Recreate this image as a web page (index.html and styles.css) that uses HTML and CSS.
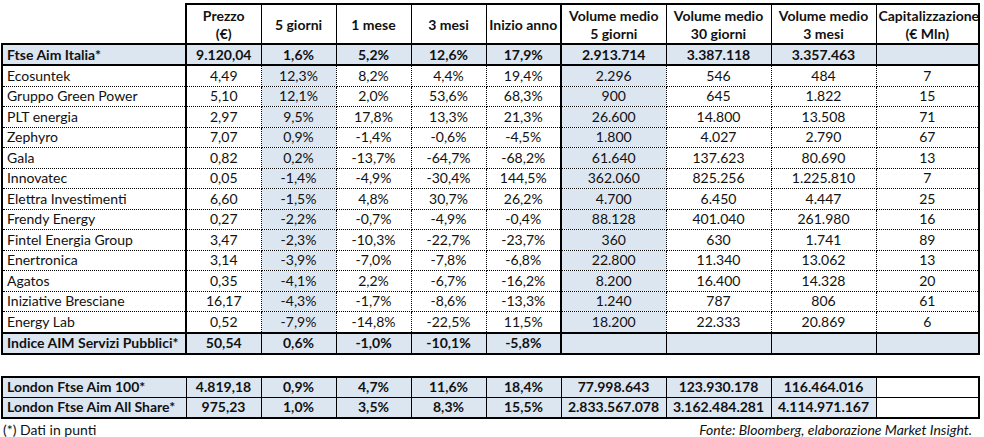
FILE: index.html
```html
<!DOCTYPE html>
<html lang="it">
<head>
<meta charset="utf-8">
<link rel="stylesheet" href="styles.css">
</head>
<body>
<div class="page">
<table class="tbl">
  <colgroup>
    <col class="c-label"><col class="c-s"><col class="c-s"><col class="c-s"><col class="c-s"><col class="c-s">
    <col class="c-w"><col class="c-w"><col class="c-w"><col class="c-cap">
  </colgroup>
  <thead>
    <tr class="head">
      <th class="blank"></th>
      <th class="g">Prezzo<br>(€)</th>
      <th>5 giorni</th>
      <th>1 mese</th>
      <th>3 mesi</th>
      <th>Inizio anno</th>
      <th class="g">Volume medio<br>5 giorni</th>
      <th>Volume medio<br>30 giorni</th>
      <th>Volume medio<br>3 mesi</th>
      <th class="last">Capitalizzazione<br>(€ Mln)</th>
    </tr>
  </thead>
  <tbody>
    <tr class="idx">
      <td class="lbl">Ftse Aim Italia*</td>
      <td class="g">9.120,04</td><td>1,6%</td><td>5,2%</td><td>12,6%</td><td>17,9%</td>
      <td class="g">2.913.714</td><td>3.387.118</td><td>3.357.463</td><td class="last"></td>
    </tr>
    <tr class="row"><td class="lbl">Ecosuntek</td><td class="g">4,49</td><td class="b">12,3%</td><td>8,2%</td><td>4,4%</td><td>19,4%</td><td class="g b">2.296</td><td>546</td><td>484</td><td class="last">7</td></tr>
    <tr class="row"><td class="lbl">Gruppo Green Power</td><td class="g">5,10</td><td class="b">12,1%</td><td>2,0%</td><td>53,6%</td><td>68,3%</td><td class="g b">900</td><td>645</td><td>1.822</td><td class="last">15</td></tr>
    <tr class="row"><td class="lbl">PLT energia</td><td class="g">2,97</td><td class="b">9,5%</td><td>17,8%</td><td>13,3%</td><td>21,3%</td><td class="g b">26.600</td><td>14.800</td><td>13.508</td><td class="last">71</td></tr>
    <tr class="row"><td class="lbl">Zephyro</td><td class="g">7,07</td><td class="b">0,9%</td><td>-1,4%</td><td>-0,6%</td><td>-4,5%</td><td class="g b">1.800</td><td>4.027</td><td>2.790</td><td class="last">67</td></tr>
    <tr class="row"><td class="lbl">Gala</td><td class="g">0,82</td><td class="b">0,2%</td><td>-13,7%</td><td>-64,7%</td><td>-68,2%</td><td class="g b">61.640</td><td>137.623</td><td>80.690</td><td class="last">13</td></tr>
    <tr class="row"><td class="lbl">Innovatec</td><td class="g">0,05</td><td class="b">-1,4%</td><td>-4,9%</td><td>-30,4%</td><td>144,5%</td><td class="g b">362.060</td><td>825.256</td><td>1.225.810</td><td class="last">7</td></tr>
    <tr class="row"><td class="lbl">Elettra Investimenti</td><td class="g">6,60</td><td class="b">-1,5%</td><td>4,8%</td><td>30,7%</td><td>26,2%</td><td class="g b">4.700</td><td>6.450</td><td>4.447</td><td class="last">25</td></tr>
    <tr class="row"><td class="lbl">Frendy Energy</td><td class="g">0,27</td><td class="b">-2,2%</td><td>-0,7%</td><td>-4,9%</td><td>-0,4%</td><td class="g b">88.128</td><td>401.040</td><td>261.980</td><td class="last">16</td></tr>
    <tr class="row"><td class="lbl">Fintel Energia Group</td><td class="g">3,47</td><td class="b">-2,3%</td><td>-10,3%</td><td>-22,7%</td><td>-23,7%</td><td class="g b">360</td><td>630</td><td>1.741</td><td class="last">89</td></tr>
    <tr class="row"><td class="lbl">Enertronica</td><td class="g">3,14</td><td class="b">-3,9%</td><td>-7,0%</td><td>-7,8%</td><td>-6,8%</td><td class="g b">22.800</td><td>11.340</td><td>13.062</td><td class="last">13</td></tr>
    <tr class="row"><td class="lbl">Agatos</td><td class="g">0,35</td><td class="b">-4,1%</td><td>2,2%</td><td>-6,7%</td><td>-16,2%</td><td class="g b">8.200</td><td>16.400</td><td>14.328</td><td class="last">20</td></tr>
    <tr class="row"><td class="lbl">Iniziative Bresciane</td><td class="g">16,17</td><td class="b">-4,3%</td><td>-1,7%</td><td>-8,6%</td><td>-13,3%</td><td class="g b">1.240</td><td>787</td><td>806</td><td class="last">61</td></tr>
    <tr class="row"><td class="lbl">Energy Lab</td><td class="g">0,52</td><td class="b">-7,9%</td><td>-14,8%</td><td>-22,5%</td><td>11,5%</td><td class="g b">18.200</td><td>22.333</td><td>20.869</td><td class="last">6</td></tr>
    <tr class="idx">
      <td class="lbl">Indice AIM Servizi Pubblici*</td>
      <td class="g">50,54</td><td>0,6%</td><td>-1,0%</td><td>-10,1%</td><td>-5,8%</td>
      <td class="g"></td><td></td><td></td><td class="last"></td>
    </tr>
  </tbody>
</table>

<table class="tbl tbl2">
  <colgroup>
    <col class="c-label"><col class="c-s"><col class="c-s"><col class="c-s"><col class="c-s"><col class="c-s">
    <col class="c-w"><col class="c-w"><col class="c-w"><col class="c-cap">
  </colgroup>
  <tbody>
    <tr class="ldn first"><td class="lbl">London Ftse Aim 100*</td><td>4.819,18</td><td>0,9%</td><td>4,7%</td><td>11,6%</td><td>18,4%</td><td>77.998.643</td><td>123.930.178</td><td>116.464.016</td><td class="last white"></td></tr>
    <tr class="ldn end"><td class="lbl">London Ftse Aim All Share*</td><td>975,23</td><td>1,0%</td><td>3,5%</td><td>8,3%</td><td>15,5%</td><td>2.833.567.078</td><td>3.162.484.281</td><td>4.114.971.167</td><td class="last white"></td></tr>
  </tbody>
</table>

<div class="notes">
  <span class="note">(*) Dati in punti</span>
  <span class="source">Fonte: Bloomberg, elaborazione Market Insight.</span>
</div>
</div>
</body>
</html>
```

FILE: styles.css
```css
html, body {
  margin: 0;
  padding: 0;
  background: #fff;
}
.page {
  padding: 3px 0 0 1px;
  width: 978px;
  font-family: Lato, "Open Sans", sans-serif;
  font-size: 14px;
  color: #111;
}
.tbl {
  border-collapse: collapse;
  table-layout: fixed;
  width: 978px;
}
.c-label { width: 184px; }
.c-s { width: 75px; }
.c-w { width: 105px; }
.c-cap { width: 103px; }

.tbl td, .tbl th {
  padding: 0 2px;
  text-align: center;
  white-space: nowrap;
  overflow: hidden;
  line-height: 16px;
}
.head th {
  height: 37px;
  font-weight: bold;
  border: 1px solid #000;
  border-top: 2px solid #000;
  border-bottom: 2px solid #000;
  line-height: 18px;
  padding-top: 1px;
}
.head th.blank { border: none; border-bottom: 2px solid #000; }
.head th.g { border-left: 2px solid #000; }
.head th.last { border-right: 2px solid #000; }

.tbl td { border: 1px dotted #000; }
.tbl td.lbl { text-align: left; padding-left: 4px; border-left: 2px solid #000; }
.tbl td.g { border-left: 2px solid #000; }
.tbl td.last { border-right: 2px solid #000; }
.tbl td.b { background: #dce6f1; }

.row td { height: 19.5px; }

.idx td {
  height: 19px;
  background: #dce6f1;
  font-weight: bold;
  border-top: 2px solid #000;
  border-bottom: 2px solid #000;
  border-left: 1px solid #000;
  border-right: 1px solid #000;
}
.idx td.lbl, .idx td.g { border-left: 2px solid #000; }
.idx td.last { border-right: 2px solid #000; }

.tbl2 { margin-top: 21px; }
.ldn td {
  height: 19px;
  background: #dce6f1;
  font-weight: bold;
  border: 1px solid #000;
}
.ldn td.lbl { border-left: 2px solid #000; }
.ldn td.last { border-right: 2px solid #000; }
.ldn.first td { border-top: 2px solid #000; }
.ldn.end td { border-bottom: 2px solid #000; }
.ldn td.white { background: #fff; }

.notes {
  display: flex;
  justify-content: space-between;
  padding: 2px 7px 0 2px;
  line-height: 18px;
}
.source { font-style: italic; }
```
